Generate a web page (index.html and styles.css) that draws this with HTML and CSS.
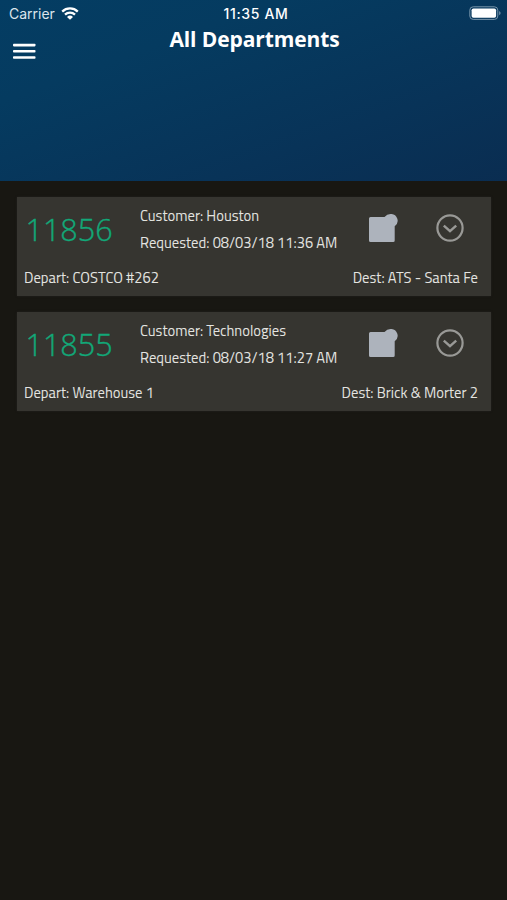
FILE: index.html
```html
<!DOCTYPE html>
<html lang="en">
<head>
<meta charset="utf-8">
<title>All Departments</title>
<link rel="stylesheet" href="styles.css">
</head>
<body>
<header class="header">
  <div class="status">
    <div class="carrier"><span>Carrier</span>
      <svg class="wifi" width="18" height="13" viewBox="0 0 18 13" fill="none" stroke="#fff" stroke-width="2.3"><path d="M1.2 4.6a11.2 11.2 0 0 1 15.6 0M4 7.6a7.2 7.2 0 0 1 10 0"/><path d="M9 12.8 6 9.9a4.4 4.4 0 0 1 6 0Z" fill="#fff" stroke="none"/></svg>
    </div>
    <div class="time">11:35 AM</div>
    <svg class="battery" width="32" height="15" viewBox="0 0 32 15"><rect x=".8" y=".8" width="28" height="12.6" rx="3.4" fill="none" stroke="#7794aa"/><rect x="2.6" y="2.5" width="24.5" height="9.2" rx="1.8" fill="#fff"/><path d="M30.2 4.9q1.4.7 1.4 2.2t-1.4 2.2Z" fill="#7794aa"/></svg>
  </div>
  <div class="nav">
    <svg class="menu" width="23" height="17" viewBox="0 0 23 17" fill="#fff"><rect y=".8" width="22.5" height="2.6" rx=".8"/><rect y="7" width="22.5" height="2.6" rx=".8"/><rect y="13.2" width="22.5" height="2.6" rx=".8"/></svg>
    <h1 class="title">All Departments</h1>
  </div>
</header>
<main class="list">
  <article class="card">
    <div class="top">
      <div class="number">11856</div>
      <div class="info"><div>Customer: Houston</div><div>Requested: 08/03/18 11:36 AM</div></div>
      <svg class="note" width="29" height="29" viewBox="0 0 29 29" fill="#adb3bc"><path d="M1.5 3H15.5Q18 0 21.5 0A6.7 6.7 0 0 1 25.7 12.2V26.5Q25.7 28 24.2 28H1.5Q0 28 0 26.5V4.5Q0 3 1.5 3Z"/></svg>
      <svg class="expand" width="28" height="28" viewBox="0 0 28 28" fill="none" stroke="#999996" stroke-width="2.2"><circle cx="14" cy="14" r="12.6"/><path d="m7.8 11.6 6.2 5.6 6.2-5.6" stroke-width="2.4"/></svg>
    </div>
    <div class="route"><span>Depart: COSTCO #262</span><span>Dest: ATS - Santa Fe</span></div>
  </article>
  <article class="card">
    <div class="top">
      <div class="number">11855</div>
      <div class="info"><div>Customer: Technologies</div><div>Requested: 08/03/18 11:27 AM</div></div>
      <svg class="note" width="29" height="29" viewBox="0 0 29 29" fill="#adb3bc"><path d="M1.5 3H15.5Q18 0 21.5 0A6.7 6.7 0 0 1 25.7 12.2V26.5Q25.7 28 24.2 28H1.5Q0 28 0 26.5V4.5Q0 3 1.5 3Z"/></svg>
      <svg class="expand" width="28" height="28" viewBox="0 0 28 28" fill="none" stroke="#999996" stroke-width="2.2"><circle cx="14" cy="14" r="12.6"/><path d="m7.8 11.6 6.2 5.6 6.2-5.6" stroke-width="2.4"/></svg>
    </div>
    <div class="route"><span>Depart: Warehouse 1</span><span>Dest: Brick &amp; Morter 2</span></div>
  </article>
</main>
</body>
</html>
```
FILE: styles.css
```css
* { box-sizing: border-box; }
body { margin: 0; min-height: 900px; background: #181712; color: #e4e4e0; font-family: "Titillium Web", Roboto, sans-serif; }
.header { height: 181px; color: #fff; background: linear-gradient(160deg, #043d63 0%, #053b60 28%, #083358 70%, #0a2d51 100%); }
.status { display: grid; grid-template-columns: 1fr auto 1fr; height: 27px; padding: 0 6px 0 9px; align-items: center; font: 14px/27px Inter, sans-serif; }
.carrier { display: flex; align-items: center; gap: 6px; color: #dce5ec; letter-spacing: 0; }
.time { font-weight: 500; font-size: 14px; letter-spacing: .65px; padding-left: 2px; }
.battery { justify-self: end; }
.nav { display: grid; grid-template-columns: 40px 1fr 40px; }
.menu { margin: 16px 0 0 13px; }
.title { margin: 0 0 0 2px; font: 700 21px/24px "Open Sans", sans-serif; text-align: center; letter-spacing: -.1px; }
.list { display: flex; flex-direction: column; gap: 16px; padding: 16px 16px 0 17px; }
.card { height: 99px; background: #363530; padding: 0 13px 0 7px; box-shadow: 0 0 2px #24231f; }
.top { display: grid; grid-template-columns: 116px 229px 67px 28px; height: 67px; }
.number { color: #12a878; font-family: "Open Sans", sans-serif; font-size: 30.5px; font-weight: 300; line-height: 65px; padding-left: 1.5px; -webkit-text-stroke: .4px #12a878; }
.info { display: grid; grid-template-rows: 27px 27px; padding-top: 5.4px; line-height: 27px; font-size: 14.65px; white-space: nowrap; }
.note { margin-top: 17px; }
.expand { margin-top: 17px; }
.route { display: flex; justify-content: space-between; font-size: 14.65px; line-height: 28px; white-space: nowrap; }
```
